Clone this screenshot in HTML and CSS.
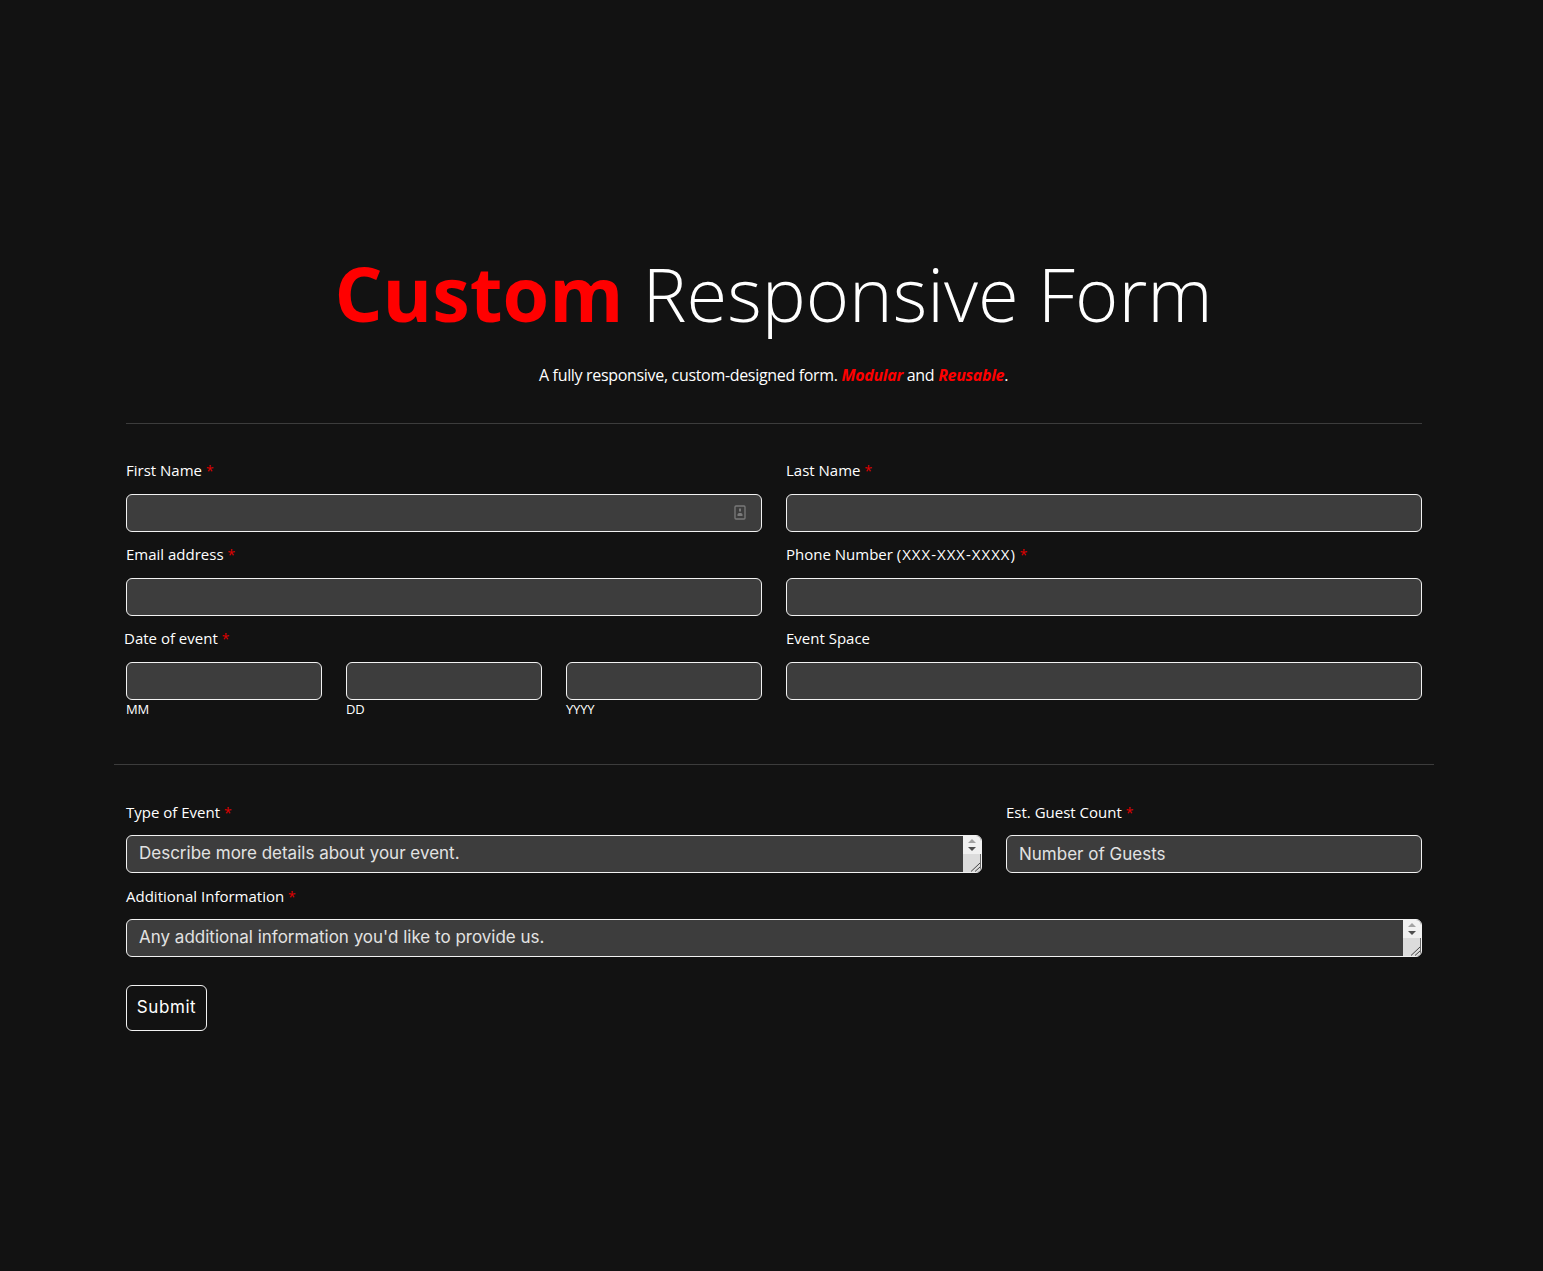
FILE: index.html
```html
<!DOCTYPE html>
<html lang="en">
<head>
<meta charset="utf-8">
<title>Custom Responsive Form</title>
<link rel="stylesheet" href="styles.css">
</head>
<body>
<main class="page">
  <header class="hero">
    <h1 class="title"><strong class="title-strong">Custom</strong> Responsive Form</h1>
    <p class="lead">A fully responsive, custom-designed form. <em class="accent">Modular</em> and <em class="accent">Reusable</em>.</p>
  </header>
  <hr class="rule rule-inner">
  <form class="form">
    <section class="grid grid-even">
      <div class="field">
        <label class="label">First Name <span class="req">*</span></label>
        <div class="control">
          <input class="input" type="text">
          <svg class="autofill-icon" width="12" height="15" viewBox="0 0 12 15" aria-hidden="true">
            <rect x="1" y="1" width="10" height="13" rx="1" fill="none" stroke="#7a7a7a" stroke-width="1.3"/>
            <rect x="5" y="3.5" width="2" height="3" fill="#7a7a7a"/>
            <path d="M3.5 11V9.5C3.5 8.6 4.4 8 6 8s2.5.6 2.5 1.5V11z" fill="#7a7a7a"/>
          </svg>
        </div>
      </div>
      <div class="field">
        <label class="label">Last Name <span class="req">*</span></label>
        <div class="control"><input class="input" type="text"></div>
      </div>
      <div class="field">
        <label class="label">Email address <span class="req">*</span></label>
        <div class="control"><input class="input" type="email"></div>
      </div>
      <div class="field">
        <label class="label">Phone Number <span class="phone-format">(XXX-XXX-XXXX)</span> <span class="req">*</span></label>
        <div class="control"><input class="input" type="tel"></div>
      </div>
      <div class="field">
        <label class="label label-date">Date of event <span class="req">*</span></label>
        <div class="date-row">
          <div class="date-part"><input class="input" type="text"><small class="hint">MM</small></div>
          <div class="date-part"><input class="input" type="text"><small class="hint">DD</small></div>
          <div class="date-part"><input class="input" type="text"><small class="hint">YYYY</small></div>
        </div>
      </div>
      <div class="field">
        <label class="label">Event Space</label>
        <div class="control"><input class="input" type="text"></div>
      </div>
    </section>
    <hr class="rule rule-outer">
    <section class="grid grid-wide">
      <div class="field">
        <label class="label label-low">Type of Event <span class="req">*</span></label>
        <div class="control">
          <textarea class="input area" rows="1" placeholder="Describe more details about your event."></textarea>
          <div class="scrollbar" aria-hidden="true">
            <span class="arrow arrow-up"></span>
            <span class="arrow arrow-down"></span>
            <svg class="grip" width="18" height="18" viewBox="0 0 18 18">
              <rect width="18" height="18" fill="#dcdcdc"/>
              <path d="M17.5 0V18" stroke="#6a6a6a" stroke-width="1" fill="none"/>
              <path d="M8 17.5 17 9M12 17.5 17 13" stroke="#444" stroke-width="1" fill="none"/>
            </svg>
          </div>
        </div>
      </div>
      <div class="field">
        <label class="label label-low">Est. Guest Count <span class="req">*</span></label>
        <div class="control"><input class="input text-input" type="text" placeholder="Number of Guests"></div>
      </div>
    </section>
    <section class="field">
      <label class="label label-low">Additional Information <span class="req">*</span></label>
      <div class="control">
        <textarea class="input area" rows="1" placeholder="Any additional information you'd like to provide us."></textarea>
        <div class="scrollbar" aria-hidden="true">
          <span class="arrow arrow-up"></span>
          <span class="arrow arrow-down"></span>
          <svg class="grip" width="18" height="18" viewBox="0 0 18 18">
            <rect width="18" height="18" fill="#dcdcdc"/>
            <path d="M17.5 0V18" stroke="#6a6a6a" stroke-width="1" fill="none"/>
            <path d="M8 17.5 17 9M12 17.5 17 13" stroke="#444" stroke-width="1" fill="none"/>
          </svg>
        </div>
      </div>
    </section>
    <button class="submit" type="button">Submit</button>
  </form>
</main>
</body>
</html>
```

FILE: styles.css
```css
* { box-sizing: border-box; }

html, body { margin: 0; padding: 0; }

body {
  min-height: 1271px;
  background: #121212;
  color: #fff;
  font-family: "Open Sans", "Noto Sans", sans-serif;
  font-size: 16px;
}

.page {
  width: 1320px;
  margin-left: 114px;
  padding-top: 247px;
}

.hero { text-align: center; margin-left: -1px; }

.title {
  margin: 0;
  font-size: 74px;
  line-height: 92px;
  font-weight: 300;
}

.title-strong { color: #f00; font-weight: 700; font-size: 75.5px; }

.lead {
  margin: 24px 0 0;
  font-size: 16px;
  line-height: 22px;
  letter-spacing: -0.32px;
}

.accent { color: #f00; font-weight: 700; font-style: italic; }

.rule {
  border: 0;
  height: 1px;
  background: #3c3c3c;
  margin: 0;
}

.rule-inner { margin: 37px 12px 0; }
.rule-outer { margin: 0 0 36px; }

.form { display: block; padding-top: 36px; }

.grid { display: grid; column-gap: 24px; padding: 0 12px; }
.grid-even { grid-template-columns: 636px 636px; padding-bottom: 45px; }
.grid-wide { grid-template-columns: 856px 416px; }

.form > .field { margin: 0 12px; }

.label {
  display: block;
  font-size: 15px;
  line-height: 20px;
  height: 34px;
}

.label-low { padding-top: 1px; }

.label-date { margin-left: -2px; }

.phone-format { letter-spacing: 1px; }

.req { color: #e00000; font-size: 14px; }

.control { position: relative; height: 38px; margin-bottom: 12px; }

.input {
  display: block;
  width: 100%;
  height: 38px;
  background: #3d3d3d;
  border: 1px solid #f2f2f2;
  border-radius: 6px;
  color: #fff;
  outline: none;
  margin: 0;
  font-family: "Inter", "Open Sans", sans-serif;
}

.area {
  resize: none;
  overflow: hidden;
  padding: 7px 12px;
  font-size: 17px;
  line-height: 20px;
}

.text-input { padding: 0 12px; font-size: 17px; }

.area::placeholder, .text-input::placeholder { color: #e2e2e2; opacity: 1; }

.autofill-icon { position: absolute; top: 11px; right: 16px; }

.date-row { display: grid; grid-template-columns: repeat(3, 196px); column-gap: 24px; }

.hint {
  display: block;
  font-size: 13px;
  line-height: 19px;
  letter-spacing: -0.2px;
}

.scrollbar {
  position: absolute;
  top: 1px;
  right: 1px;
  bottom: 1px;
  width: 18px;
  background: #f1f1f1;
  border-radius: 0 5px 5px 0;
  overflow: hidden;
}

.arrow { position: absolute; left: 5px; width: 0; height: 0; border-left: 4px solid transparent; border-right: 4px solid transparent; }
.arrow-up { top: 3px; border-bottom: 4px solid #a3a3a3; }
.arrow-down { top: 11px; border-top: 4px solid #505050; }

.grip { position: absolute; left: 0; bottom: 0; display: block; }

.submit {
  display: block;
  width: 81px;
  height: 46px;
  margin: 28px 0 0 12px;
  padding: 0 0 2px;
  background: transparent;
  color: #fff;
  border: 1px solid #f2f2f2;
  border-radius: 6px;
  font-family: "Inter", "Open Sans", sans-serif;
  font-size: 17px;
  letter-spacing: 0.6px;
}
```
